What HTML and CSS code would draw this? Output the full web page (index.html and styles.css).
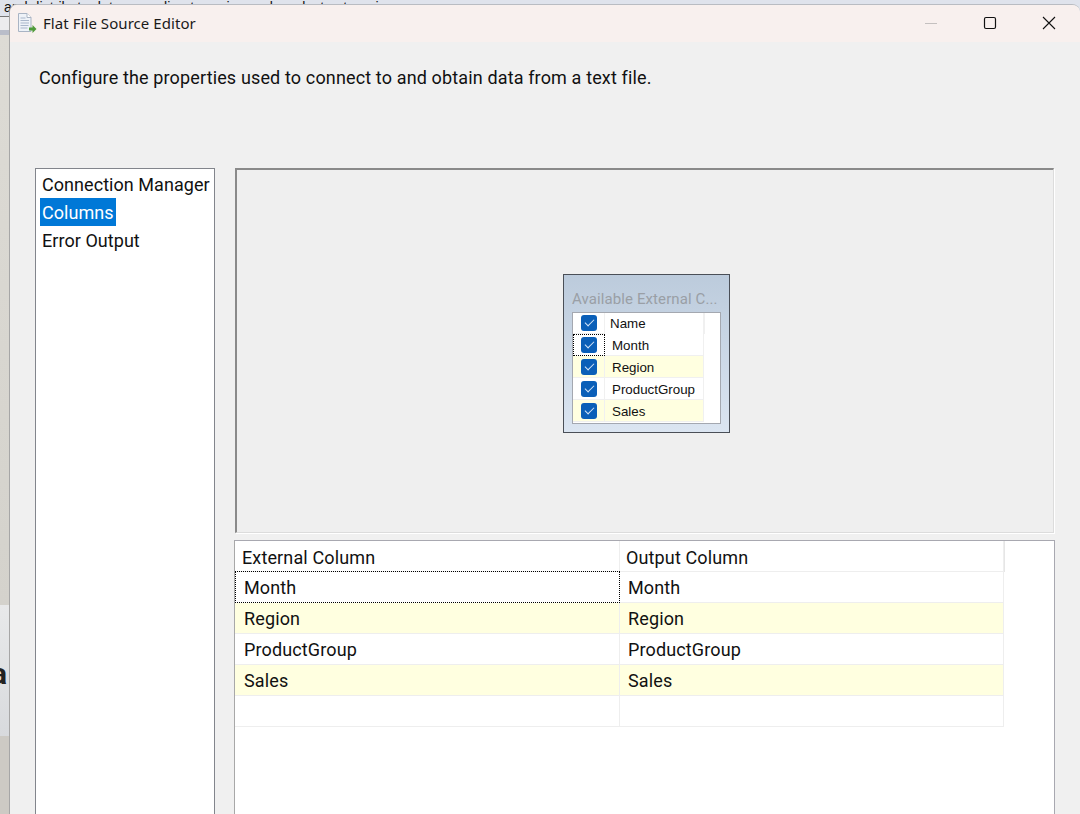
FILE: index.html
```html
<!DOCTYPE html>
<html lang="en">

<head>
    <meta charset="UTF-8">
    <title>Flat File Source Editor</title>
    <link rel="stylesheet" href="styles.css">
</head>

<body>
    <div class="desktop">
        <div class="behind">
            <p class="behind-text">and distribute data according to region and product categories</p>
            <div class="behind-gap"></div>
            <div class="behind-bar"></div>
            <div class="behind-fill"></div>
            <div class="behind-panel"><span class="behind-letter">a</span></div>
            <div class="behind-foot"></div>
        </div>
        <section class="window">
            <header class="titlebar">
                <svg class="app-icon" width="20" height="20" viewBox="0 0 20 20">
                    <path d="M1.500 0.500h8.500l4 4v14H1.500z" fill="#eef2f8" stroke="#a9b4c4" />
                    <path d="M10 0.500v4h4" fill="#fff" stroke="#a9b4c4" />
                    <path d="M3.500 5h5M3.500 7.500h8.500M3.500 10h8.500M3.500 12.500h8M3.500 15h7" stroke="#aab7cb" />
                    <path d="M12 14.500h3.500V12l4 4-4 4v-2.500H12z" fill="#4f9a3a" />
                </svg>
                <span class="title">Flat File Source Editor</span>
                <div class="controls">
                    <svg width="14" height="14" viewBox="0 0 14 14">
                        <path d="M1 7.500h12" stroke="#c4c0bf" />
                    </svg>
                    <svg width="14" height="14" viewBox="0 0 14 14">
                        <rect x="1.500" y="1.500" width="11" height="11" rx="1.500" fill="none" stroke="#111" stroke-width="1.200" />
                    </svg>
                    <svg width="14" height="14" viewBox="0 0 14 14">
                        <path d="M1 1l12 12M13 1L1 13" stroke="#111" stroke-width="1.100" />
                    </svg>
                </div>
            </header>
            <p class="intro">Configure the properties used to connect to and obtain data from a text file.</p>
            <div class="content">
                <ul class="nav">
                    <li><span>Connection Manager</span></li>
                    <li><span class="selected">Columns</span></li>
                    <li><span>Error Output</span></li>
                </ul>
                <div class="right">
                    <div class="designer">
                        <div class="picker">
                            <div class="picker-title">Available External C...</div>
                            <div class="picker-list">
                                <div class="picker-head">
                                    <div class="check-cell"><i class="check"></i></div>
                                    <div class="picker-name">Name</div>
                                </div>
                                <div class="picker-row">
                                    <div class="check-cell focus"><i class="check"></i></div>
                                    <div class="picker-name">Month</div>
                                </div>
                                <div class="picker-row alt">
                                    <div class="check-cell"><i class="check"></i></div>
                                    <div class="picker-name">Region</div>
                                </div>
                                <div class="picker-row">
                                    <div class="check-cell"><i class="check"></i></div>
                                    <div class="picker-name">ProductGroup</div>
                                </div>
                                <div class="picker-row alt">
                                    <div class="check-cell"><i class="check"></i></div>
                                    <div class="picker-name">Sales</div>
                                </div>
                            </div>
                        </div>
                    </div>
                    <div class="grid">
                        <div class="grid-head">
                            <div class="cell">External Column</div>
                            <div class="cell">Output Column</div>
                        </div>
                        <div class="grid-row">
                            <div class="cell focus">Month</div>
                            <div class="cell">Month</div>
                        </div>
                        <div class="grid-row alt">
                            <div class="cell">Region</div>
                            <div class="cell">Region</div>
                        </div>
                        <div class="grid-row">
                            <div class="cell">ProductGroup</div>
                            <div class="cell">ProductGroup</div>
                        </div>
                        <div class="grid-row alt">
                            <div class="cell">Sales</div>
                            <div class="cell">Sales</div>
                        </div>
                        <div class="grid-row">
                            <div class="cell"></div>
                            <div class="cell"></div>
                        </div>
                    </div>
                </div>
            </div>
        </section>
    </div>
</body>

</html>
```

FILE: styles.css
```css
* {
    margin: 0;
    padding: 0;
    box-sizing: border-box;
}

html,
body {
    width: 1080px;
    height: 814px;
    overflow: hidden;
    font-family: Roboto, Arial, sans-serif;
}

.desktop {
    position: relative;
    width: 1080px;
    height: 814px;
    overflow: hidden;
    background: #dfe3ec;
}

/* the page showing behind the dialog */
.behind {
    display: flex;
    flex-direction: column;
    height: 814px;
}

.behind-text {
    flex: none;
    height: 17px;
    padding: 2px 0 0 4px;
    font-family: "Liberation Sans", sans-serif;
    font-size: 14.2px;
    line-height: 11px;
    color: #111;
    white-space: nowrap;
    overflow: hidden;
    border-bottom: 1px solid #777;
}

.behind-gap {
    flex: none;
    width: 9px;
    height: 13px;
    background: #ececee;
}

.behind-bar {
    flex: none;
    width: 9px;
    height: 5px;
    background: #b9bdc9;
}

.behind-fill {
    flex: none;
    width: 9px;
    height: 570px;
    background: linear-gradient(#dddbd5, #d4d2cc);
}

.behind-foot {
    flex: 1;
    width: 9px;
    background: #cdcac4;
}

.behind-panel {
    position: relative;
    flex: none;
    width: 9px;
    height: 131px;
    background: linear-gradient(#e8e9ea, #d8dadd);
    overflow: hidden;
}

.behind-letter {
    position: absolute;
    left: -9px;
    top: 49px;
    font-size: 30px;
    line-height: 40px;
    font-weight: 700;
    color: #222;
}

/* the dialog */
.window {
    position: absolute;
    left: 9px;
    top: 4px;
    width: 1071px;
    height: 810px;
    background: #f0f0f0;
    border-top: 1px solid #b9bcc2;
    border-left: 1px solid #a6a6a6;
    border-top-left-radius: 8px;
    border-top-right-radius: 8px;
    overflow: hidden;
}

.titlebar {
    display: flex;
    align-items: center;
    height: 37px;
    padding: 0 0 2px 7px;
    background: #f8f0ee;
}

.app-icon {
    margin-right: 6px;
}

.title {
    font-family: "Noto Sans", Arial, sans-serif;
    font-size: 15px;
    line-height: 18px;
    letter-spacing: 0.06px;
    color: #1a1a1a;
}

.controls {
    display: flex;
    align-items: center;
    gap: 45px;
    margin-left: auto;
    padding-right: 24px;
}

.intro {
    height: 126px;
    padding: 23px 0 0 29px;
    font-size: 18px;
    line-height: 25px;
    letter-spacing: 0.14px;
    color: #111;
}

.content {
    display: flex;
    gap: 20px;
    padding-left: 25px;
}

.nav {
    flex: none;
    width: 180px;
    height: 660px;
    padding: 1px 0 0 4px;
    list-style: none;
    background: #fff;
    border: 1px solid #82858c;
    font-size: 18px;
    letter-spacing: 0.05px;
    color: #111;
}

.nav li {
    height: 28px;
    line-height: 30px;
    white-space: nowrap;
}

.nav span {
    display: inline-block;
    height: 28px;
    padding: 0 2px;
}

.nav .selected {
    background: #0078d7;
    color: #fff;
}

.right {
    width: 820px;
}

.designer {
    display: flex;
    align-items: center;
    justify-content: center;
    width: 819px;
    height: 365px;
    padding: 4px 0 0 3px;
    border: 1px solid #dcdcdc;
    border-top: 2px solid #8a8a8a;
    border-left: 2px solid #8a8a8a;
    background: #efefef;
    box-shadow: 1px 1px 0 #fff;
}

.picker {
    width: 167px;
    height: 159px;
    padding: 12px 8px 0;
    border: 1px solid #4a4f57;
    background: linear-gradient(#bccbdc, #dbe5f1);
}

.picker-title {
    height: 25px;
    font-size: 15px;
    line-height: 24px;
    letter-spacing: 0.1px;
    color: #9a9fa6;
    white-space: nowrap;
}

.picker-list {
    width: 149px;
    height: 112px;
    background: #fff;
    border: 1px solid #a4a8b0;
    font-family: "Liberation Sans", Arial, sans-serif;
    font-size: 13.33px;
    color: #111;
}

.picker-head,
.picker-row {
    display: flex;
    height: 22px;
}

.picker-head {
    height: 21px;
}

.picker-name {
    line-height: 22px;
}

.picker-head .picker-name {
    width: 100px;
    padding-left: 5px;
    border-right: 2px solid #f0f0f0;
}

.picker-row .picker-name {
    width: 99px;
    padding-left: 7px;
    line-height: 24px;
    border-bottom: 1px solid #f0f0f0;
    border-right: 1px solid #f0f0f0;
}

.check-cell {
    display: flex;
    align-items: center;
    justify-content: center;
    width: 32px;
    padding-top: 1px;
    border-right: 1px solid #f0f0f0;
    border-bottom: 1px solid #f0f0f0;
}

.check-cell.focus {
    padding-top: 0;
    border: 1px dotted #000;
}

.check {
    display: block;
    position: relative;
    width: 16px;
    height: 16px;
    border-radius: 3px;
    background: #0a5fb8;
}

.check::after {
    content: "";
    position: absolute;
    left: 4px;
    top: 4px;
    width: 8px;
    height: 4px;
    border-left: 1px solid #d5e6f8;
    border-bottom: 1px solid #d5e6f8;
    transform: rotate(-45deg);
}

.alt {
    background: #ffffe0;
}

.picker-row.alt {
    width: 131px;
}

/* lower table */
.grid {
    width: 821px;
    height: 280px;
    margin: 7px 0 0 -1px;
    background: #fff;
    border: 1px solid #a8a8b0;
    border-left-color: #a8a8a8;
    font-size: 18px;
    letter-spacing: 0.13px;
    color: #111;
}

.grid-head,
.grid-row {
    display: flex;
    width: 769px;
    height: 31px;
}

.grid-head {
    width: 770px;
    border-right: 2px solid #e6e6e6;
}

.cell {
    flex: none;
    width: 385px;
    padding-left: 9px;
    line-height: 32px;
    white-space: nowrap;
    border-right: 1px solid #eee;
    border-bottom: 1px solid #eee;
}

.cell + .cell {
    width: 384px;
    padding-left: 8px;
}

.grid-head .cell {
    padding-left: 7px;
    line-height: 33px;
}

.grid-head .cell + .cell {
    padding-left: 6px;
}

.cell.focus {
    margin-top: -1px;
    padding-left: 8px;
    border: 1px dotted #000;
}
```
